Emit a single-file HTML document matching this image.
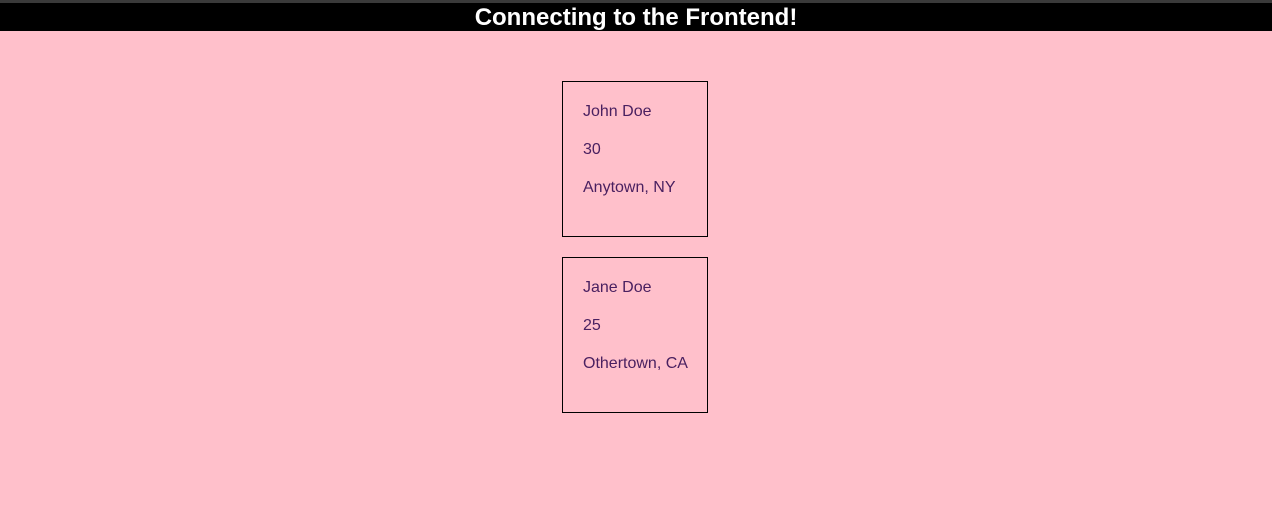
<!DOCTYPE html>
<html><head><style>
html,body{margin:0;padding:0}
body{width:1272px;height:522px;background:#ffc0cb;font-family:"Liberation Sans",Arial,sans-serif;overflow:hidden;position:relative}
.top{height:3px;background:#3a3a3a}
h1{margin:0;height:28px;background:#000;color:#fff;font-size:24px;font-weight:bold;text-align:center;line-height:30px}
.card{position:absolute;left:562px;width:144px;height:154px;border:1px solid #000;box-sizing:content-box}
.card p{position:absolute;left:20px;margin:0;font-size:16px;line-height:18px;color:#4a2060;white-space:nowrap}
</style></head><body>
<div class="top"></div>
<h1>Connecting to the Frontend!</h1>
<div class="card" style="top:81px"><p style="top:21px">John Doe</p><p style="top:59px">30</p><p style="top:97px">Anytown, NY</p></div>
<div class="card" style="top:257px"><p style="top:21px">Jane Doe</p><p style="top:59px">25</p><p style="top:97px">Othertown, CA</p></div>
</body></html>
